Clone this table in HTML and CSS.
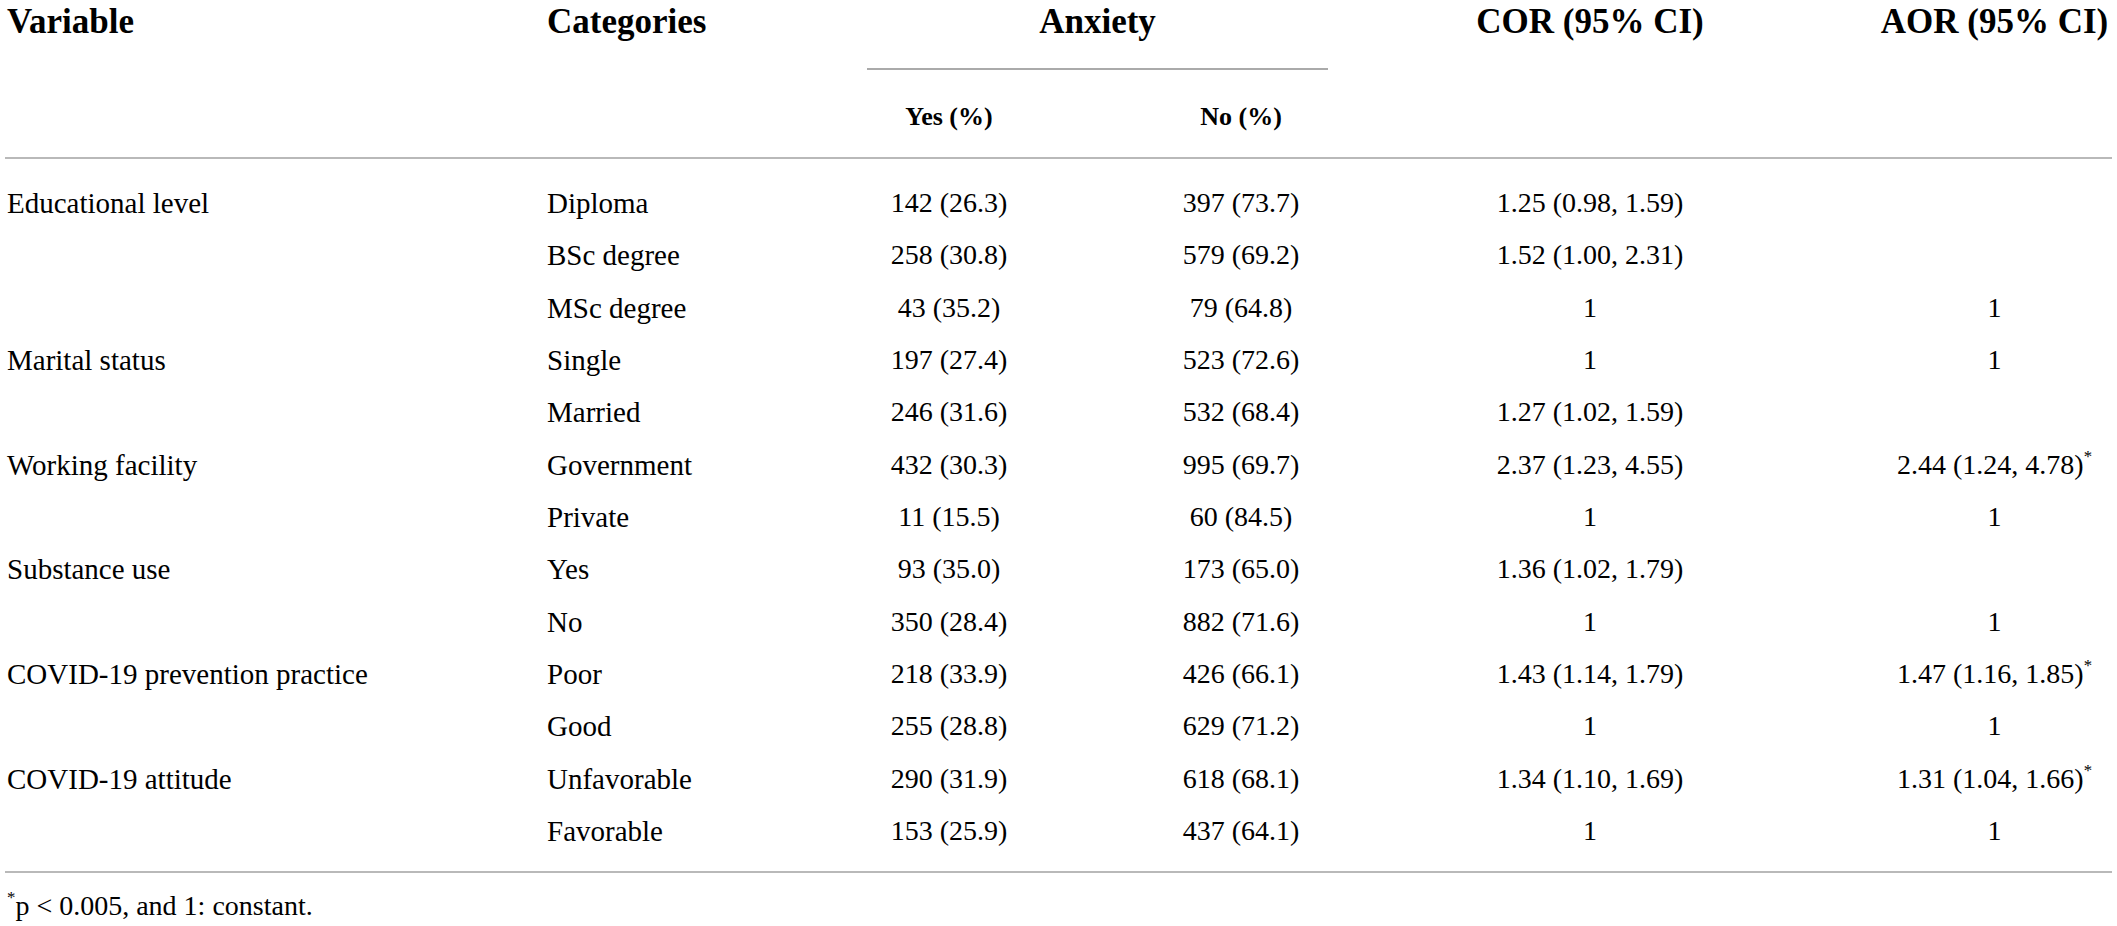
FILE: index.html
```
<!DOCTYPE html>
<html>
  <head>
    <meta charset="UTF-8" />
    <title>Factors associated with anxiety</title>
    <link rel="stylesheet" href="styles.css">
  </head>
  <body>
    <div class="table-wrap">
      <table class="data-table">
        <colgroup>
          <col class="col-var">
          <col class="col-cat">
          <col class="col-yes">
          <col class="col-no">
          <col class="col-cor">
          <col class="col-aor">
        </colgroup>
        <thead>
          <tr class="head-top">
            <th rowspan="2" class="left">Variable</th>
            <th rowspan="2" class="left">Categories</th>
            <th colspan="2" class="group"><div class="group-label">Anxiety</div></th>
            <th rowspan="2">COR (95% CI)</th>
            <th rowspan="2" class="aor">AOR (95% CI)</th>
          </tr>
          <tr class="head-sub">
            <th>Yes (%)</th>
            <th>No (%)</th>
          </tr>
        </thead>
        <tbody>
          <tr>
            <td class="left">Educational level</td>
            <td class="left">Diploma</td>
            <td>142 (26.3)</td>
            <td>397 (73.7)</td>
            <td>1.25 (0.98, 1.59)</td>
            <td class="aor"></td>
          </tr>
          <tr>
            <td class="left"></td>
            <td class="left">BSc degree</td>
            <td>258 (30.8)</td>
            <td>579 (69.2)</td>
            <td>1.52 (1.00, 2.31)</td>
            <td class="aor"></td>
          </tr>
          <tr>
            <td class="left"></td>
            <td class="left">MSc degree</td>
            <td>43 (35.2)</td>
            <td>79 (64.8)</td>
            <td>1</td>
            <td class="aor">1</td>
          </tr>
          <tr>
            <td class="left">Marital status</td>
            <td class="left">Single</td>
            <td>197 (27.4)</td>
            <td>523 (72.6)</td>
            <td>1</td>
            <td class="aor">1</td>
          </tr>
          <tr>
            <td class="left"></td>
            <td class="left">Married</td>
            <td>246 (31.6)</td>
            <td>532 (68.4)</td>
            <td>1.27 (1.02, 1.59)</td>
            <td class="aor"></td>
          </tr>
          <tr>
            <td class="left">Working facility</td>
            <td class="left">Government</td>
            <td>432 (30.3)</td>
            <td>995 (69.7)</td>
            <td>2.37 (1.23, 4.55)</td>
            <td class="aor">2.44 (1.24, 4.78)<sup>*</sup></td>
          </tr>
          <tr>
            <td class="left"></td>
            <td class="left">Private</td>
            <td>11 (15.5)</td>
            <td>60 (84.5)</td>
            <td>1</td>
            <td class="aor">1</td>
          </tr>
          <tr>
            <td class="left">Substance use</td>
            <td class="left">Yes</td>
            <td>93 (35.0)</td>
            <td>173 (65.0)</td>
            <td>1.36 (1.02, 1.79)</td>
            <td class="aor"></td>
          </tr>
          <tr>
            <td class="left"></td>
            <td class="left">No</td>
            <td>350 (28.4)</td>
            <td>882 (71.6)</td>
            <td>1</td>
            <td class="aor">1</td>
          </tr>
          <tr>
            <td class="left">COVID-19 prevention practice</td>
            <td class="left">Poor</td>
            <td>218 (33.9)</td>
            <td>426 (66.1)</td>
            <td>1.43 (1.14, 1.79)</td>
            <td class="aor">1.47 (1.16, 1.85)<sup>*</sup></td>
          </tr>
          <tr>
            <td class="left"></td>
            <td class="left">Good</td>
            <td>255 (28.8)</td>
            <td>629 (71.2)</td>
            <td>1</td>
            <td class="aor">1</td>
          </tr>
          <tr>
            <td class="left">COVID-19 attitude</td>
            <td class="left">Unfavorable</td>
            <td>290 (31.9)</td>
            <td>618 (68.1)</td>
            <td>1.34 (1.10, 1.69)</td>
            <td class="aor">1.31 (1.04, 1.66)<sup>*</sup></td>
          </tr>
          <tr>
            <td class="left"></td>
            <td class="left">Favorable</td>
            <td>153 (25.9)</td>
            <td>437 (64.1)</td>
            <td>1</td>
            <td class="aor">1</td>
          </tr>
        </tbody>
      </table>
      <p class="footnote"><sup>*</sup>p &lt; 0.005, and 1: constant.</p>
    </div>
  </body>
</html>
```

FILE: styles.css
```
body {
  margin: 0;
  background: #fff;
  color: #000;
  font-family: "Liberation Serif", "Times New Roman", serif;
}
.table-wrap {
  padding: 0 5px;
}
.data-table {
  width: 2107px;
  table-layout: fixed;
  border-collapse: collapse;
}
.col-var { width: 540px; }
.col-cat { width: 322px; }
.col-yes { width: 164px; }
.col-no { width: 420px; }
.col-cor { width: 278px; }
.col-aor { width: 383px; }

th, td {
  padding: 0;
  text-align: center;
  white-space: nowrap;
}
th.left, td.left {
  text-align: left;
  padding-left: 2px;
}
th.aor, td.aor {
  padding-left: 148px;
}

/* header */
thead {
  border-bottom: 2px solid #b9b9b9;
}
thead th {
  font-weight: bold;
  font-size: 35px;
  line-height: 44px;
  vertical-align: top;
}
.head-top {
  height: 70px;
}
th.group {
  text-align: left;
}
.group-label {
  width: 461px;
  height: 68px;
  text-align: center;
  border-bottom: 2px solid #aaa;
}
.head-sub {
  height: 88px;
}
.head-sub th {
  font-size: 26px;
  line-height: 30px;
  vertical-align: middle;
  padding-top: 6px;
}

/* body rows */
tbody td {
  font-size: 28px;
  line-height: 30px;
  height: 52.33px;
  vertical-align: middle;
}
tbody td.left {
  font-size: 29px;
}
tbody tr:first-child td {
  padding-top: 18px;
}
tbody tr:last-child td {
  padding-bottom: 14px;
}
.data-table tbody {
  border-bottom: 2px solid #b9b9b9;
}
sup {
  font-size: 0.6em;
  line-height: 0;
  vertical-align: 0.7em;
}

.footnote {
  margin: 18px 0 0 2px;
  font-size: 28px;
  line-height: 30px;
}
```
